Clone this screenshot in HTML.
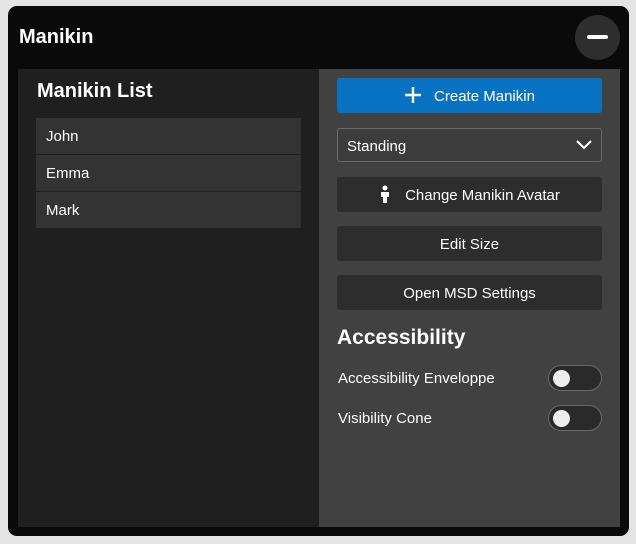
<!DOCTYPE html>
<html><head><style>
body{margin:0;width:636px;height:544px;background:#e4e4e4;font-family:"Liberation Sans",sans-serif;color:#fff;position:relative;overflow:hidden}
.a{position:absolute}
.panel{left:8px;top:6px;width:621px;height:530px;background:#0a0a0a;border-radius:9px}
.left{left:18px;top:69px;width:301px;height:458px;background:#1f1f1f}
.right{left:319px;top:69px;width:301px;height:458px;background:#414141}
.li{left:36px;width:265px;height:36px;background:#333;font-size:15px;line-height:38px;padding-left:10px;box-sizing:border-box}
.btn{left:337px;width:265px;height:35px;background:#2d2d2d;border-radius:3px;font-size:15px;line-height:37px;text-align:center}
.tg{left:548px;width:54px;height:26px;border:1px solid #6a6a6a;border-radius:14px;background:#2a2a2a;box-sizing:border-box}
.tg:after{content:"";position:absolute;left:4px;top:4px;width:17px;height:17px;border-radius:50%;background:#eee}
.lbl{left:338px;font-size:15px}
</style></head><body>
<div class="a panel"></div>
<div class="a" style="left:19px;top:26px;font-size:20px;font-weight:bold">Manikin</div>
<div class="a" style="left:575px;top:15px;width:45px;height:45px;border-radius:50%;background:#2e2e2e"></div>
<div class="a" style="left:587px;top:35px;width:21px;height:4px;border-radius:2px;background:#fff"></div>
<div class="a left"></div><div class="a right"></div>
<div class="a" style="left:37px;top:80px;font-size:20px;font-weight:bold">Manikin List</div>
<div class="a li" style="top:118px">John</div>
<div class="a li" style="top:155px">Emma</div>
<div class="a li" style="top:192px">Mark</div>
<div class="a btn" style="top:78px;background:#0872c2"><svg width="18" height="18" style="vertical-align:-3px;margin-right:12px"><path d="M9 1V17M1 9H17" stroke="#fff" stroke-width="2.4"/></svg>Create Manikin</div>
<div class="a" style="left:337px;top:128px;width:265px;height:34px;border:1px solid #6a6a6a;border-radius:3px;box-sizing:border-box;background:#3c3c3c;font-size:15px;line-height:35px;padding-left:9px">Standing
<svg class="a" style="right:9px;top:11px" width="16" height="10"><path d="M1 1L8 8L15 1" stroke="#fff" stroke-width="2" fill="none"/></svg></div>
<div class="a btn" style="top:177px"><svg width="12" height="18" style="vertical-align:-3px;margin-right:14px"><circle cx="6" cy="3" r="2.5" fill="#fff"/><path d="M2 7H10V12H8V18H4V12H2Z" fill="#fff"/></svg>Change Manikin Avatar</div>
<div class="a btn" style="top:226px">Edit Size</div>
<div class="a btn" style="top:275px">Open MSD Settings</div>
<div class="a" style="left:337px;top:326px;font-size:21px;font-weight:bold">Accessibility</div>
<div class="a lbl" style="top:370px">Accessibility Enveloppe</div>
<div class="a tg" style="top:365px"></div>
<div class="a lbl" style="top:410px">Visibility Cone</div>
<div class="a tg" style="top:405px"></div>
</body></html>
